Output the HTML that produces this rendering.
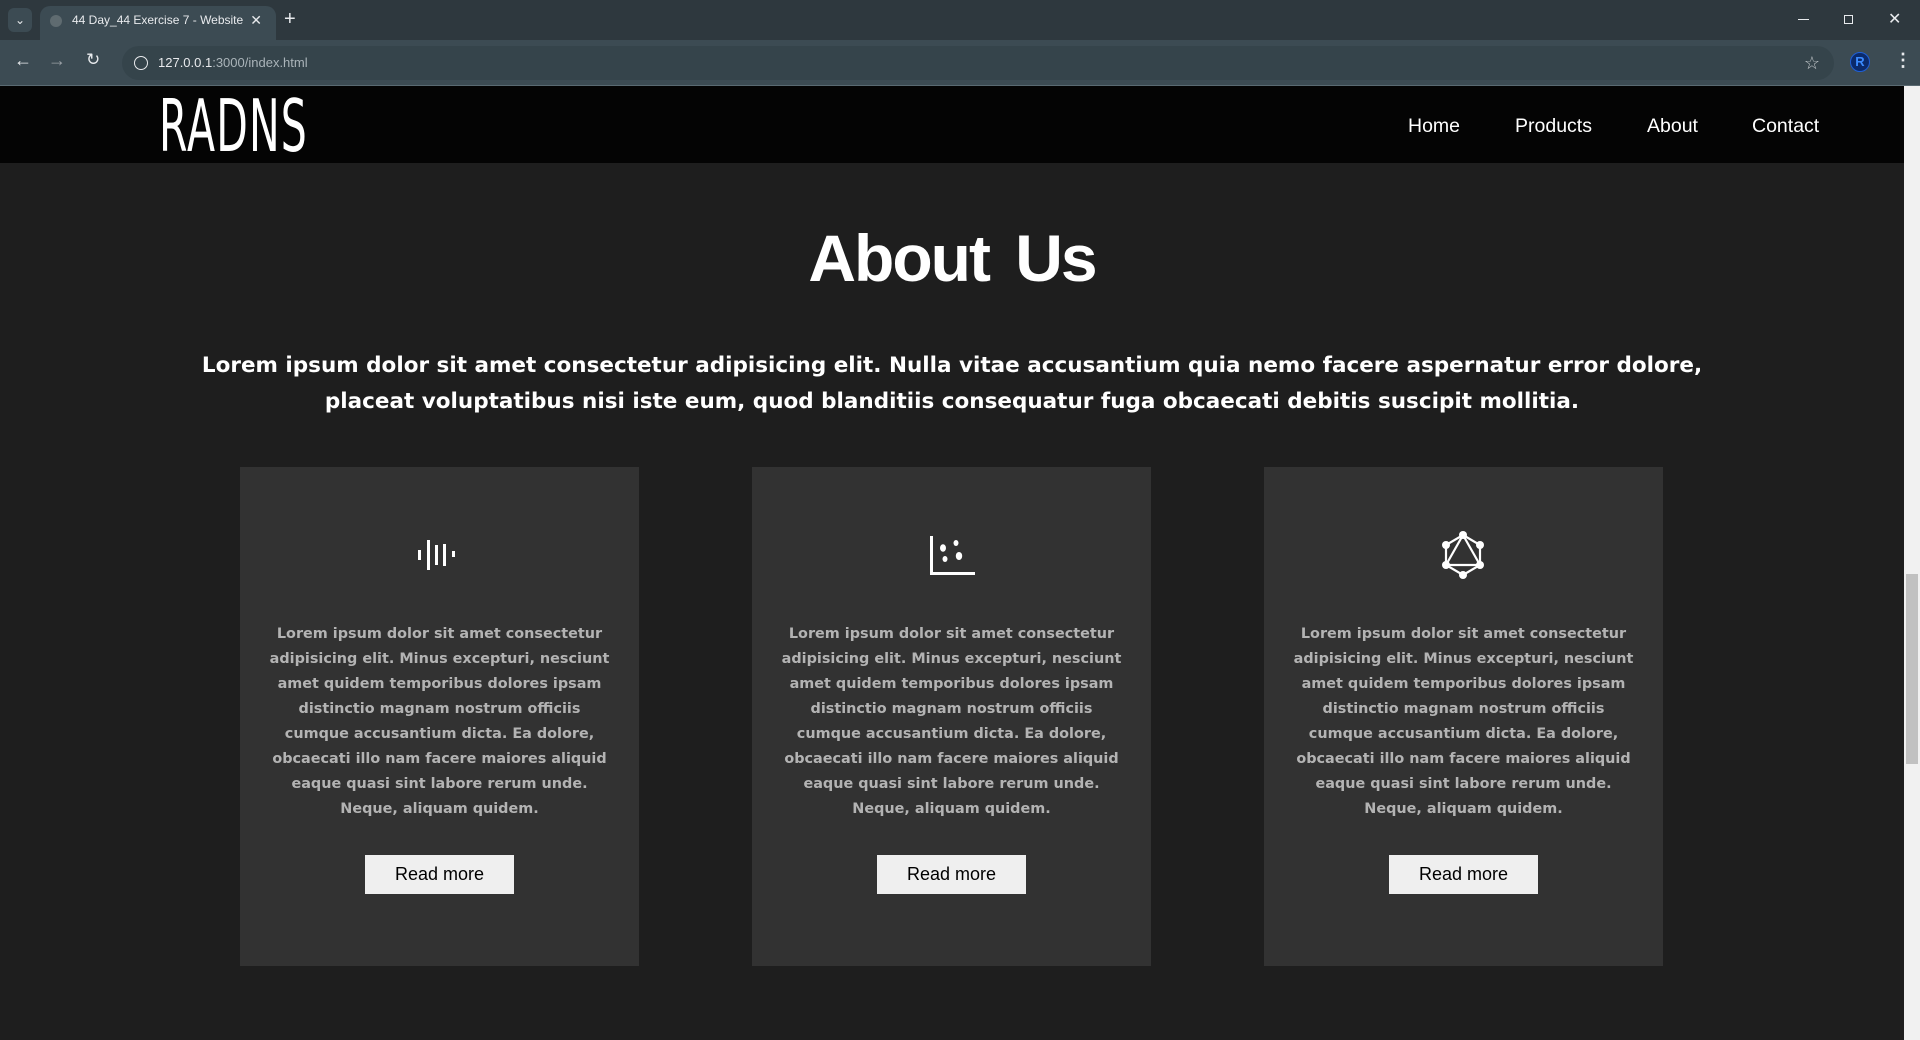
<!DOCTYPE html>
<html><head><meta charset="utf-8">
<style>
*{margin:0;padding:0;box-sizing:border-box}
html,body{width:1920px;height:1040px;overflow:hidden;background:#1e1e1e;font-family:"Liberation Sans",sans-serif}
.tabbar{position:absolute;left:0;top:0;width:1920px;height:40px;background:#2e383e}
.tab{position:absolute;left:40px;top:6px;width:236px;height:34px;background:#3c4b53;border-radius:10px 10px 0 0;color:#e8eaed;font-size:12px;line-height:29px;padding-left:32px}
.toolbar{position:absolute;left:0;top:40px;width:1920px;height:46px;background:#3c4b53;border-bottom:1px solid #5a6a72}
.omni{position:absolute;left:122px;top:6px;width:1712px;height:34px;border-radius:17px;background:#35444b;color:#e8eaed;font-size:13px;line-height:34px;padding-left:36px}
.nav{position:absolute;left:0;top:86px;width:1904px;height:77px;background:#040404}
.logo{position:absolute;left:159px;top:88px;font-family:"DejaVu Sans","Liberation Sans",sans-serif;font-size:72px;color:#fff;transform:scaleX(0.57);transform-origin:left top;letter-spacing:2px;line-height:76px}
.scroll{position:absolute;left:1904px;top:86px;width:16px;height:954px;background:#f1f1f1}
.thumb{position:absolute;left:1906px;top:574px;width:12px;height:190px;background:#c1c1c1}
h1{position:absolute;left:0;width:1904px;top:220px;text-align:center;color:#fff;font-size:66px;font-weight:bold;word-spacing:10px;letter-spacing:-2px}
.lead{position:absolute;left:0;width:1904px;top:348px;text-align:center;color:#fff;font-family:"DejaVu Sans",sans-serif;font-weight:bold;font-size:21.5px;line-height:36px;white-space:nowrap}
.card{position:absolute;top:467px;width:399px;height:499px;background:#323232}
.card svg{position:absolute;left:175px;top:64px}
.card p{position:absolute;left:0;width:399px;top:155px;text-align:center;color:#b3b3b3;font-family:"DejaVu Sans",sans-serif;font-weight:bold;font-size:14.4px;line-height:25px;white-space:nowrap}
.card .btn{position:absolute;left:125px;top:388px;width:149px;height:39px;background:#efefef;color:#000;font-size:18px;line-height:39px;text-align:center}
.nl{position:absolute;top:115px;color:#fff;font-size:19.5px}
</style></head><body>
<div class="tabbar">
 <div style="position:absolute;left:8px;top:8px;width:24px;height:24px;border-radius:6px;background:#3c4b53;color:#e8eaed;font-size:12px;text-align:center;line-height:24px">&#8964;</div>
 <div class="tab"><span style="position:absolute;left:10px;top:9px;width:12px;height:12px;border-radius:50%;background:#5f6b70"></span>44 Day_44 Exercise 7 - Website<span style="position:absolute;right:14px;top:0;font-size:14px">✕</span></div>
 <div style="position:absolute;left:284px;top:8px;color:#e8eaed;font-size:20px">+</div>
 <div style="position:absolute;left:1798px;top:19px;width:11px;height:1px;background:#e8eaed"></div>
 <div style="position:absolute;left:1844px;top:15px;width:9px;height:9px;border:1px solid #e8eaed"></div>
 <div style="position:absolute;left:1888px;top:9px;color:#e8eaed;font-size:16px">✕</div>
</div>
<div class="toolbar">
 <div style="position:absolute;left:14px;top:10px;color:#e8eaed;font-size:18px">←</div>
 <div style="position:absolute;left:48px;top:10px;color:#9aa0a6;font-size:18px">→</div>
 <div style="position:absolute;left:86px;top:10px;color:#e8eaed;font-size:17px">↻</div>
 <div class="omni"><span style="position:absolute;left:12px;top:10px;width:14px;height:14px;border:1.5px solid #e8eaed;border-radius:50%"></span>127.0.0.1<span style="color:#aab4b9">:3000/index.html</span>
  <span style="position:absolute;right:14px;top:0;color:#c4c9cc;font-size:18px">☆</span></div>
 <div style="position:absolute;left:1850px;top:12px;width:20px;height:20px;border-radius:50%;background:#0b2a6b;border:1px solid #1e5fd8;color:#3b8bff;font-size:13px;font-weight:bold;text-align:center;line-height:18px">R</div>
 <div style="position:absolute;left:1894px;top:10px;color:#e8eaed;font-size:18px;font-weight:bold">⋮</div>
</div>
<div class="nav"></div>
<div class="logo">RADNS</div>
<div class="nl" style="left:1408px">Home</div>
<div class="nl" style="left:1515px">Products</div>
<div class="nl" style="left:1647px">About</div>
<div class="nl" style="left:1752px">Contact</div>
<div class="scroll"></div><div class="thumb"></div>
<h1>About Us</h1>
<div class="lead">Lorem ipsum dolor sit amet consectetur adipisicing elit. Nulla vitae accusantium quia nemo facere aspernatur error dolore,<br>placeat voluptatibus nisi iste eum, quod blanditiis consequatur fuga obcaecati debitis suscipit mollitia.</div>

<div class="card" style="left:240px">
 <svg width="48" height="48" viewBox="0 0 48 48"><g fill="#fff"><rect x="3" y="19" width="3" height="10"/><rect x="12" y="9" width="3" height="30"/><rect x="20" y="14" width="3" height="20"/><rect x="28" y="13" width="3" height="22"/><rect x="37" y="20" width="3" height="6"/></g></svg>
 <p>Lorem ipsum dolor sit amet consectetur<br>adipisicing elit. Minus excepturi, nesciunt<br>amet quidem temporibus dolores ipsam<br>distinctio magnam nostrum officiis<br>cumque accusantium dicta. Ea dolore,<br>obcaecati illo nam facere maiores aliquid<br>eaque quasi sint labore rerum unde.<br>Neque, aliquam quidem.</p>
 <div class="btn">Read more</div>
</div>
<div class="card" style="left:752px">
 <svg width="48" height="48" viewBox="0 0 48 48"><path d="M4.5 5V42.5H48" stroke="#fff" stroke-width="3" fill="none"/><g fill="#fff"><ellipse cx="16" cy="17" rx="3" ry="3.7"/><ellipse cx="29" cy="12" rx="2.5" ry="3"/><ellipse cx="18" cy="28" rx="2.5" ry="3"/><ellipse cx="32" cy="25" rx="3.2" ry="4"/></g></svg>
 <p>Lorem ipsum dolor sit amet consectetur<br>adipisicing elit. Minus excepturi, nesciunt<br>amet quidem temporibus dolores ipsam<br>distinctio magnam nostrum officiis<br>cumque accusantium dicta. Ea dolore,<br>obcaecati illo nam facere maiores aliquid<br>eaque quasi sint labore rerum unde.<br>Neque, aliquam quidem.</p>
 <div class="btn">Read more</div>
</div>
<div class="card" style="left:1264px">
 <svg width="48" height="48" viewBox="0 0 48 48"><g stroke="#fff" stroke-width="2.2" fill="none"><path d="M24 4L41 14V34L24 44L7 34V14Z"/><path d="M24 4L41 34H7Z"/></g><g fill="#fff"><circle cx="24" cy="4" r="4"/><circle cx="41" cy="14" r="4"/><circle cx="41" cy="34" r="4"/><circle cx="24" cy="44" r="4"/><circle cx="7" cy="34" r="4"/><circle cx="7" cy="14" r="4"/></g></svg>
 <p>Lorem ipsum dolor sit amet consectetur<br>adipisicing elit. Minus excepturi, nesciunt<br>amet quidem temporibus dolores ipsam<br>distinctio magnam nostrum officiis<br>cumque accusantium dicta. Ea dolore,<br>obcaecati illo nam facere maiores aliquid<br>eaque quasi sint labore rerum unde.<br>Neque, aliquam quidem.</p>
 <div class="btn">Read more</div>
</div>
</body></html>
